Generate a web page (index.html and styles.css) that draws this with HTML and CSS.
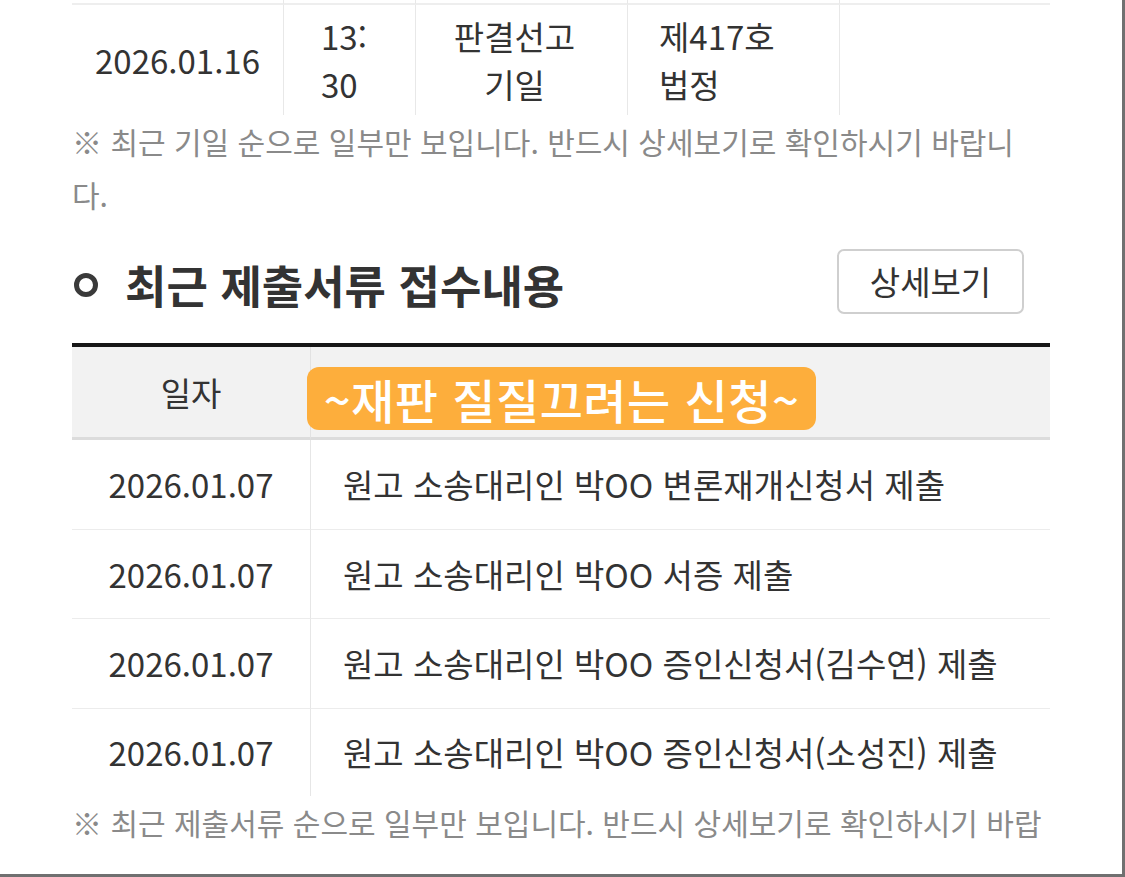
FILE: index.html
```html
<!DOCTYPE html>
<html lang="ko">
<head>
<meta charset="utf-8">
<title>사건 기일 및 제출서류</title>
<link rel="stylesheet" href="styles.css">
</head>
<body>
<div class="frame">
  <div class="sched">
    <div class="sc stub"></div><div class="sc stub"></div><div class="sc stub"></div><div class="sc stub"></div><div class="sc stub last"></div>
    <div class="sc c-date">2026.01.16</div>
    <div class="sc c-time">13:<br>30</div>
    <div class="sc c-kind">판결선고<br>기일</div>
    <div class="sc c-room">제417호<br>법정</div>
    <div class="sc last"></div>
  </div>
  <p class="note note-top">※ 최근 기일 순으로 일부만 보입니다. 반드시 상세보기로 확인하시기 바랍니다.</p>

  <div class="sec-head">
    <h2 class="sec-title"><span class="ring"></span>최근 제출서류 접수내용</h2>
    <button class="btn-detail" type="button">상세보기</button>
  </div>

  <div class="docs">
    <div class="dh dh-date">일자</div>
    <div class="dh dh-content">
      <span class="sticker">~재판 질질끄려는 신청~</span>
    </div>

    <div class="dc dc-date">2026.01.07</div>
    <div class="dc dc-content">원고 소송대리인 박OO 변론재개신청서 제출</div>

    <div class="dc dc-date">2026.01.07</div>
    <div class="dc dc-content">원고 소송대리인 박OO 서증 제출</div>

    <div class="dc dc-date">2026.01.07</div>
    <div class="dc dc-content">원고 소송대리인 박OO 증인신청서(김수연) 제출</div>

    <div class="dc dc-date end">2026.01.07</div>
    <div class="dc dc-content end">원고 소송대리인 박OO 증인신청서(소성진) 제출</div>
  </div>
  <p class="note note-bottom">※ 최근 제출서류 순으로 일부만 보입니다. 반드시 상세보기로 확인하시기 바랍니다.</p>
</div>
</body>
</html>
```

FILE: styles.css
```css
* { box-sizing: border-box; }

html, body {
  margin: 0;
  padding: 0;
  background: #ffffff;
}

body {
  font-family: "Noto Sans CJK KR", "Noto Sans", sans-serif;
  color: #333333;
}

.frame {
  width: 1125px;
  height: 877px;
  padding: 0 72px;
  border-right: 3px solid #707070;
  border-bottom: 3px solid #707070;
  overflow: hidden;
}

/* ---------- schedule table (top, partially visible) ---------- */
.sched {
  display: grid;
  grid-template-columns: 212px 132px 212px 212px 210px;
  grid-template-rows: 5px 110px;
}

.sc {
  border-right: 1px solid #e8e8e8;
  font-size: 33px;
  line-height: 48px;
  color: #333;
  display: flex;
  align-items: center;
}

.sc.stub {
  border-bottom: 2px solid #eeeeee;
}

.sc.last {
  border-right: none;
}

.c-date {
  justify-content: center;
}

.c-time {
  padding-left: 37px;
}

.c-kind {
  justify-content: center;
  text-align: center;
  padding-right: 14px;
}

.c-room {
  padding-left: 31px;
}

/* ---------- notes ---------- */
.note {
  margin: 0;
  font-size: 30px;
  line-height: 53px;
  color: #8a8a8a;
}

.note-top {
  width: 960px;
}

.note-bottom {
  width: 978px;
  height: 53px;
  overflow: hidden;
}

/* ---------- section header ---------- */
.sec-head {
  display: flex;
  align-items: center;
  justify-content: space-between;
  margin-top: 28px;
  padding-right: 26px;
}

.sec-title {
  display: flex;
  align-items: center;
  margin: 0;
  font-size: 45px;
  font-weight: 700;
  color: #333;
  line-height: 56px;
  padding-top: 6px;
}

.ring {
  width: 24px;
  height: 24px;
  border: 5px solid #3a3a3a;
  border-radius: 50%;
  margin: 0 27px 0 2px;
  flex: none;
}

.btn-detail {
  width: 187px;
  height: 65px;
  border: 2px solid #cfcfcf;
  border-radius: 7px;
  background: #ffffff;
  font-family: inherit;
  font-size: 33px;
  color: #333;
  padding: 0;
  line-height: 1;
}

/* ---------- documents table ---------- */
.docs {
  margin-top: 29px;
  border-top: 4px solid #161616;
  display: grid;
  grid-template-columns: 239px 739px;
  grid-auto-rows: auto;
}

.dh {
  height: 93px;
  background: #f2f2f2;
  border-bottom: 3px solid #dcdcdc;
  display: flex;
  align-items: center;
  font-size: 33px;
  color: #333;
}

.dh-date {
  justify-content: center;
  border-right: 1px solid #e2e2e2;
}

.dh-content {
  position: relative;
}

.sticker {
  position: absolute;
  left: -4px;
  top: 20px;
  width: 509px;
  height: 63px;
  background: #fdae3c;
  border-radius: 12px;
  color: #ffffff;
  font-size: 47px;
  font-weight: 500;
  line-height: 63px;
  text-align: center;
  letter-spacing: 0.5px;
  white-space: nowrap;
}

.dc {
  height: 89.5px;
  border-bottom: 1px solid #ececec;
  display: flex;
  align-items: center;
  font-size: 33px;
  color: #333;
}

.dc-date {
  justify-content: center;
  border-right: 1px solid #e6e6e6;
}

.dc-content {
  padding-left: 32px;
}

.dc.end {
  border-bottom: none;
  height: 87px;
}
```
